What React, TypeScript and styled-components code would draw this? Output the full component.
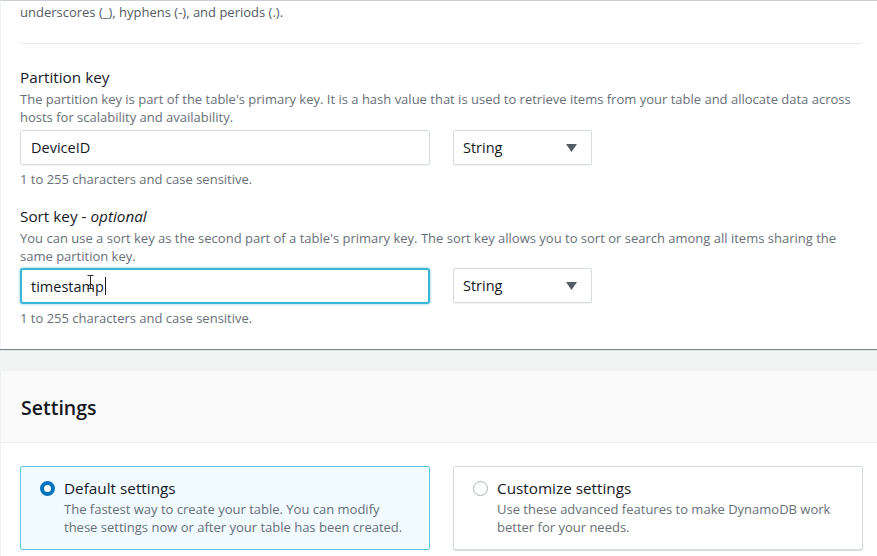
import React from "react";
import styled, { createGlobalStyle } from "styled-components";

const Global = createGlobalStyle`
  html, body { margin: 0; padding: 0; background: #f2f3f3; }
  body { font-family: "Open Sans", "Noto Sans", sans-serif; color: #16191f; overflow: hidden; }
  * { box-sizing: border-box; }
`;

const Page = styled.div`
  width: 877px;
  height: 556px;
  overflow: hidden;
  background: #f2f3f3;
`;

const Card = styled.section`
  background: #fff;
  border-top: 1px solid #c9cfd4;
  border-left: 1px solid #f0f1f2;
  box-shadow: 0 1px 1px 0 rgba(0, 28, 36, 0.3), 0 1px 0 0 #aab7b8;
  padding: 2px 15px 23px 19px;
`;

const Hint = styled.div`
  font-size: 13px;
  line-height: 18px;
  color: #545b64;
`;

const Divider = styled.hr`
  border: none;
  border-top: 1px solid #e9ebed;
  margin: 22px 0 0;
  height: 0;
`;

const Field = styled.div<{ $top: number }>`
  margin-top: ${(p) => p.$top}px;
  display: flex;
  flex-direction: column;
`;

const Label = styled.div`
  font-size: 15.3px;
  line-height: 20px;
  color: #16191f;
  em { font-style: italic; }
`;

const Desc = styled.div`
  font-size: 13px;
  line-height: 18px;
  color: #687078;
  margin-top: 3px;
`;

const Row = styled.div<{ $top: number }>`
  display: grid;
  grid-template-columns: 410px 139px;
  column-gap: 23px;
  margin-top: ${(p) => p.$top}px;
`;

const InputWrap = styled.div`
  position: relative;
`;

const Input = styled.div<{ $focus?: boolean }>`
  height: ${(p) => (p.$focus ? 36 : 35)}px;
  border: ${(p) => (p.$focus ? "2px solid #3bb5d6" : "1px solid #d5dbdb")};
  border-radius: 3px;
  background: #fff;
  display: flex;
  align-items: center;
  padding-left: ${(p) => (p.$focus ? 9 : 10)}px;
  font-size: 14.5px;
  color: #16191f;
  box-shadow: ${(p) => (p.$focus ? "0 0 2px 1px rgba(0,161,201,0.25)" : "0 1px 1px rgba(0,0,0,0.05)")};
`;

const Caret = styled.span`
  display: inline-block;
  width: 1px;
  height: 18px;
  background: #16191f;
  margin-left: 1px;
`;

const IBeam = styled.svg`
  position: absolute;
  left: 67px;
  top: 7px;
  pointer-events: none;
`;

const Select = styled.div`
  height: 35px;
  border: 1px solid #d5dbdb;
  border-radius: 2px;
  background: #fff;
  display: flex;
  align-items: center;
  justify-content: space-between;
  padding: 0 14px 0 9px;
  font-size: 14.5px;
  color: #16191f;
  box-shadow: 0 1px 1px rgba(0,0,0,0.05);
`;

const Helper = styled.div`
  font-size: 13px;
  line-height: 16px;
  color: #687078;
  margin-top: 6px;
`;

const Gap = styled.div`
  height: 22px;
`;

const SettingsCard = styled.section`
  background: #fff;
  min-height: 200px;
  border-left: 1px solid #f0f1f2;
`;

const Header = styled.header`
  height: 72px;
  background: #fafafa;
  border-bottom: 1px solid #eaeded;
  display: flex;
  align-items: center;
  padding: 0 20px;
  padding-top: 1px;
  font-size: 19.5px;
  font-weight: 600;
  color: #16191f;
`;

const Tiles = styled.div`
  display: grid;
  grid-template-columns: 410px 410px;
  column-gap: 23px;
  padding: 23px 15px 0 19px;
`;

const Tile = styled.div<{ $selected?: boolean }>`
  height: 84px;
  border: 1px solid ${(p) => (p.$selected ? "#66c6de" : "#d5dbdb")};
  background: ${(p) => (p.$selected ? "#f1faff" : "#fff")};
  border-radius: 2px;
  box-shadow: ${(p) => (p.$selected ? "none" : "0 1px 1px rgba(0,28,36,0.15)")};
  display: grid;
  grid-template-columns: 15px 1fr;
  column-gap: 9px;
  padding: 11px 12px 0 19px;
`;

const Radio = styled.span<{ $on?: boolean }>`
  width: 15px;
  height: 15px;
  border-radius: 50%;
  margin-top: 3px;
  background: #fff;
  border: ${(p) => (p.$on ? "4px solid #0073bb" : "1.5px solid #aab7b8")};
`;

const TileText = styled.div`
  display: flex;
  flex-direction: column;
`;

const TileTitle = styled.div`
  font-size: 15.3px;
  line-height: 20px;
  color: #16191f;
`;

const TileDesc = styled.div`
  font-size: 13px;
  line-height: 18px;
  color: #687078;
  margin-top: 2px;
  max-width: 345px;
`;

const Triangle = () => (
  <svg width="11" height="8" viewBox="0 0 11 8">
    <path d="M0 0 H11 L5.5 8 Z" fill="#545b64" />
  </svg>
);

export default function App() {
  return (
    <Page>
      <Global />
      <Card>
        <Hint>underscores (_), hyphens (-), and periods (.).</Hint>
        <Divider />
        <Field $top={23}>
          <Label>Partition key</Label>
          <Desc>
            The partition key is part of the table's primary key. It is a hash value that is used to retrieve items from your table and allocate data across hosts for scalability and availability.
          </Desc>
          <Row $top={4}>
            <Input>DeviceID</Input>
            <Select>
              String
              <Triangle />
            </Select>
          </Row>
          <Helper>1 to 255 characters and case sensitive.</Helper>
        </Field>
        <Field $top={19}>
          <Label>
            Sort key - <em>optional</em>
          </Label>
          <Desc>
            You can use a sort key as the second part of a table's primary key. The sort key allows you to sort or search among all items sharing the same partition key.
          </Desc>
          <Row $top={3}>
            <InputWrap>
              <Input $focus>
                timestamp
                <Caret />
              </Input>
              <IBeam width="7" height="14" viewBox="0 0 7 14">
                <path d="M0.5 0.5 H6.5 M3.5 0.5 V13.5 M0.5 13.5 H6.5" stroke="#333" strokeWidth="1" fill="none" />
              </IBeam>
            </InputWrap>
            <Select>
              String
              <Triangle />
            </Select>
          </Row>
          <Helper>1 to 255 characters and case sensitive.</Helper>
        </Field>
      </Card>
      <Gap />
      <SettingsCard>
        <Header>Settings</Header>
        <Tiles>
          <Tile $selected>
            <Radio $on />
            <TileText>
              <TileTitle>Default settings</TileTitle>
              <TileDesc>
                The fastest way to create your table. You can modify these settings now or after your table has been created.
              </TileDesc>
            </TileText>
          </Tile>
          <Tile>
            <Radio />
            <TileText>
              <TileTitle>Customize settings</TileTitle>
              <TileDesc>
                Use these advanced features to make DynamoDB work better for your needs.
              </TileDesc>
            </TileText>
          </Tile>
        </Tiles>
      </SettingsCard>
    </Page>
  );
}
